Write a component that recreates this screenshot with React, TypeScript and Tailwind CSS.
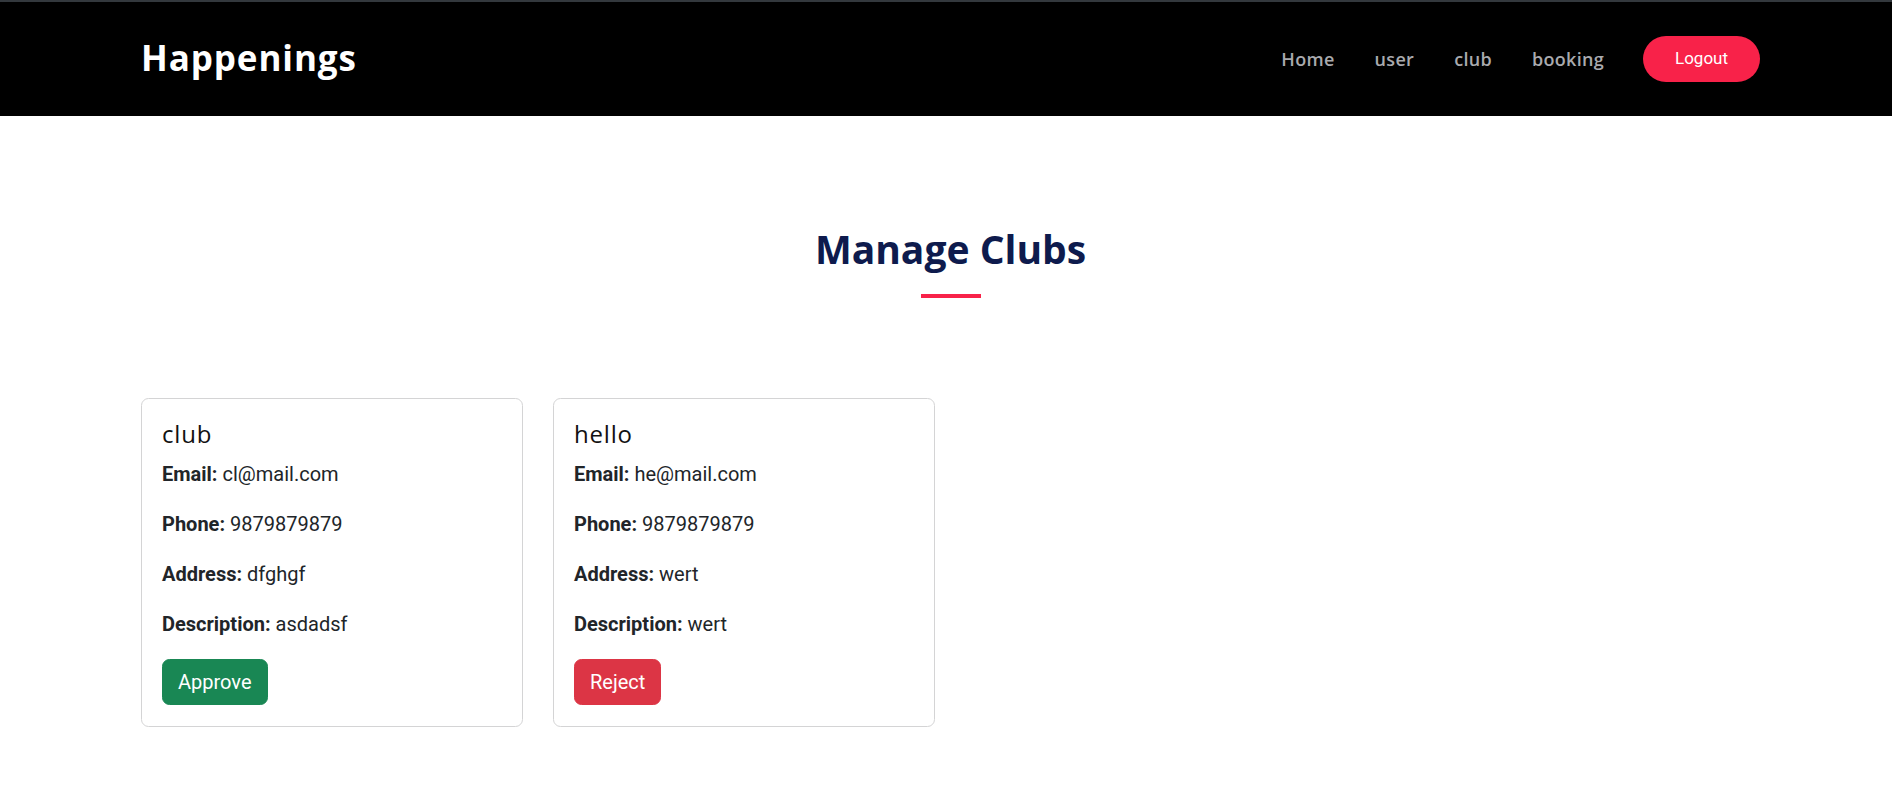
const clubs = [
  {
    name: "club",
    email: "cl@mail.com",
    phone: "9879879879",
    address: "dfghgf",
    description: "asdadsf",
    action: "approve" as const,
  },
  {
    name: "hello",
    email: "he@mail.com",
    phone: "9879879879",
    address: "wert",
    description: "wert",
    action: "reject" as const,
  },
];

const heading = { fontFamily: "'Open Sans', Lato, sans-serif" };
const body = { fontFamily: "Roboto, 'Liberation Sans', sans-serif" };

function Header() {
  return (
    <header className="h-[116px] border-t-2 border-[#33383d] bg-black">
      <div className="flex h-full items-center justify-between pl-[141px] pr-[132px]">
        <a href="#" style={heading} className="-mt-[2px] text-[35px] font-bold tracking-[0.9px] text-white">
          Happenings
        </a>
        <nav style={heading} className="flex items-center text-[18px] font-semibold text-[#a9aaae]">
          <a href="#" className="mr-[40px] tracking-[0.3px]">Home</a>
          <a href="#" className="mr-[40px] tracking-[0.3px]">user</a>
          <a href="#" className="mr-[40px] tracking-[0.3px]">club</a>
          <a href="#" className="mr-[39px] tracking-[0.3px]">booking</a>
          <button
            style={body}
            className="h-[46px] w-[117px] rounded-full bg-[#f82249] text-[17px] font-normal text-white"
          >
            Logout
          </button>
        </nav>
      </div>
    </header>
  );
}

type Club = (typeof clubs)[number];

function ClubCard({ club }: { club: Club }) {
  return (
    <div className="w-[382px] rounded-[7.5px] border border-[#d4d4d5] bg-white px-[20px] pt-[20px] pb-[21px]" style={body}>
      <h5 style={heading} className="mb-[10px] text-[24px] leading-[30px] font-normal tracking-[0.8px] text-[#111]">
        {club.name}
      </h5>
      <p className="mb-[20px] text-[20px] leading-[30px] text-[#212529]">
        <b>Email:</b> {club.email}
      </p>
      <p className="mb-[20px] text-[20px] leading-[30px] text-[#212529]">
        <b>Phone:</b> {club.phone}
      </p>
      <p className="mb-[20px] text-[20px] leading-[30px] text-[#212529]">
        <b>Address:</b> {club.address}
      </p>
      <p className="mb-[20px] text-[20px] leading-[30px] text-[#212529]">
        <b>Description:</b> {club.description}
      </p>
      {club.action === "approve" ? (
        <button className="rounded-[7.5px] border border-[#198754] bg-[#198754] px-[15px] py-[7px] text-[20px] leading-[30px] text-white">
          Approve
        </button>
      ) : (
        <button className="rounded-[7.5px] border border-[#dc3545] bg-[#dc3545] px-[15px] py-[7px] text-[20px] leading-[30px] text-white">
          Reject
        </button>
      )}
    </div>
  );
}

export default function App() {
  return (
    <div className="min-h-screen bg-white">
      <Header />
      <main className="pl-[141px] pr-[132px] pb-[60px]">
        <div className="flex flex-col items-center pt-[109px]">
          <h2 style={heading} className="text-[39px] leading-[48px] font-bold text-[#0e1b4d]">
            Manage Clubs
          </h2>
          <div className="mt-[21px] h-[4px] w-[60px] bg-[#f82249]" />
        </div>
        <div className="mt-[100px] flex items-start gap-[30px]">
          {clubs.map((c) => (
            <ClubCard key={c.name} club={c} />
          ))}
        </div>
      </main>
    </div>
  );
}
